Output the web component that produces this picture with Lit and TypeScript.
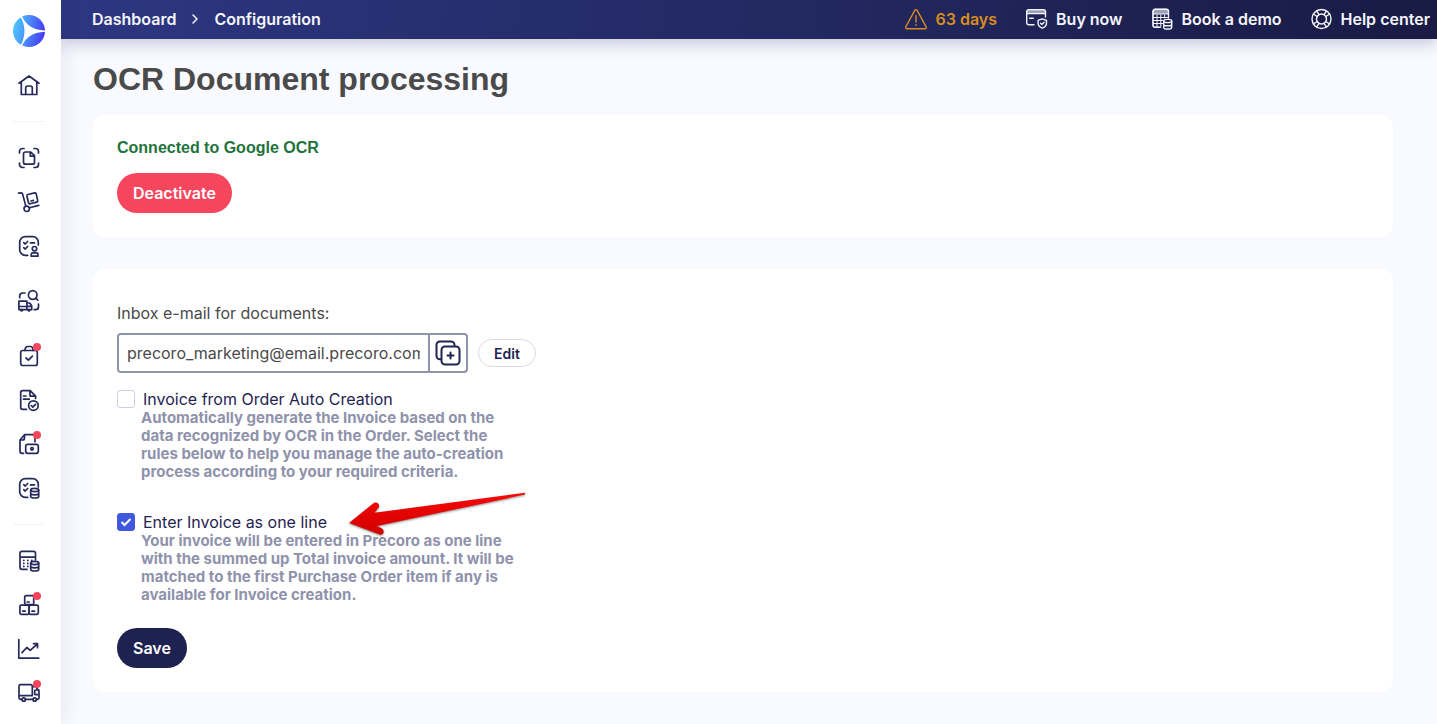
import { LitElement, html, css, svg, SVGTemplateResult } from "lit";
import { customElement, property, state } from "lit/decorators.js";

const coins = svg`<ellipse cx="17.7" cy="14" rx="4" ry="1.6"/><path d="M13.7 14v6.4c0 1 1.8 1.6 4 1.6s4-.6 4-1.6V14M13.7 17.2c0 1 1.8 1.6 4 1.6s4-.6 4-1.6"/>`;
const listFrame = svg`<path d="M21.3 11V8.2a5.5 5.5 0 0 0-5.500-5.500H8.200a5.500 5.500 0 0 0-5.500 5.500v7.600a5.500 5.500 0 0 0 5.500 5.500h2.600"/><path d="M6.700 8.700l1.500 1.300 2.500-2.500M6.700 13.700l1.500 1.300 2.500-2.500M13.500 8.900h4"/>`;
const calcDots = svg`<path stroke-dasharray=".2 3.800" d="M6.700 11.400H15M6.700 14.400H11M6.700 17.400H11"/>`;

const icons: Record<string, SVGTemplateResult> = {
  home: svg`<path d="M2 9.200 12 2l10 7.200M4.300 8v12.500h15.500V8M8.700 20.500V14a2 2 0 0 1 2-2h2.600a2 2 0 0 1 2 2v6.500"/>`,
  scan: svg`<path d="M2.500 7V5.500a3 3 0 0 1 3-3H7M17 2.500h1.500a3 3 0 0 1 3 3V7M21.500 17v1.500a3 3 0 0 1-3 3H17M7 21.500H5.500a3 3 0 0 1-3-3V17"/><path d="M8.500 6h5.300l3.700 3.700v6.500a2 2 0 0 1-2 2h-7a2 2 0 0 1-2-2V8a2 2 0 0 1 2-2zM13.300 6v4.200h4.200"/>`,
  trolley: svg`<path d="M1.500 3.200 4 2.900a1.500 1.500 0 0 1 1.600 1.200l3.200 12M12.500 17.800l9.300-2.400"/><circle cx="9.700" cy="18.800" r="2.700"/><path d="m10.900 4.500 6.800-1.600a1.300 1.300 0 0 1 1.500 1l1.500 6.700a1.300 1.300 0 0 1-1 1.500l-6.700 1.700a1.300 1.300 0 0 1-1.500-1L9.900 6a1.300 1.300 0 0 1 1-1.500zM14 11l2.300-.6"/>`,
  person: svg`${listFrame}<circle cx="17.500" cy="14.700" r="2.200"/><path d="M14.200 22.200v-1.700a1.600 1.600 0 0 1 1.600-1.600h3.600a1.600 1.600 0 0 1 1.600 1.600v1.700z"/>`,
  supplier: svg`<path d="M2.700 8.700V7a3 3 0 0 1 3-3H8M21.500 15v2.700a3 3 0 0 1-3 3h-1.300"/><circle cx="15.700" cy="6" r="4.300"/><path d="m18.800 9.200 1.900 1.900M1.900 20.600v-8.400h8v8.400M1.900 17.500h8M9.900 14h2.800l2 2.700v3.900H1.900M10 17.300h4.700"/><circle cx="4.600" cy="21.200" r=".7"/><circle cx="12" cy="21.200" r=".7"/>`,
  bag: svg`<rect x="3.700" y="6.500" width="16.600" height="15" rx="2"/><path d="M8 6.500c0-2.600 1-4 2.600-4h2.800c1.600 0 2.600 1.400 2.600 4M9 14l2.400 2.200 4-4"/>`,
  invoice: svg`<path d="M9.500 21.300H5.700a2 2 0 0 1-2-2V4.700a2 2 0 0 1 2-2h7.500l5.400 5.400v2.400M13 2.700v5.400h5.600M6.500 8H9M6.500 11.200h5.800"/><circle cx="16.400" cy="17.600" r="4.800"/><path d="m14.300 17.700 1.500 1.400 2.700-2.800"/>`,
  payment: svg`<path d="M6.500 21.300H5a2 2 0 0 1-2-2V8l4.500-5.300H16a2 2 0 0 1 2 2v5M7.500 2.700V6a2 2 0 0 1-2 2H3"/><rect x="8.700" y="12.300" width="12.600" height="9" rx="2"/><circle cx="15" cy="16.800" r="1.300"/>`,
  expense: svg`${listFrame}${coins}`,
  budget: svg`<path d="M10 20.300H5a2 2 0 0 1-2-2v-14a2 2 0 0 1 2-2h11.500a2 2 0 0 1 2 2V11M3 8.200h15.500"/>${calcDots}${coins}`,
  stock: svg`<rect x="7.700" y="2.700" width="9" height="9" rx="1.300"/><rect x="2.900" y="12.200" width="9.200" height="9.200" rx="1.300"/><rect x="12.100" y="12.200" width="9.200" height="9.200" rx="1.300"/><path d="M10.200 9h2M5.700 18.200h2.500M15 18.200h2.500"/>`,
  chart: svg`<path d="M1.800 2.500v18.600h20M5 15.700l4.800-5.200 3.400 2.800L20.300 7M16.500 6.700h4v4"/>`,
  delivery: svg`<path d="M5 18.300H3.500A1.500 1.500 0 0 1 2 16.800V5.200a1.500 1.500 0 0 1 1.500-1.500h10.300a1.500 1.500 0 0 1 1.500 1.500v9.500M2 14.700h13.300M8.500 18.300h7.400M15.300 5.700h3.500L22 10v6.800a1.500 1.500 0 0 1-1.500 1.500h-1M22 9h-3.300a1 1 0 0 0-1 1v2.700a1 1 0 0 0 1 1H22"/><circle cx="6.700" cy="18.500" r="1.700"/><circle cx="17.700" cy="18.500" r="1.700"/>`,
  warning: svg`<path d="M9.800 2.400a1.300 1.300 0 0 1 2.300 0l9.100 16.400a1.300 1.300 0 0 1-1.200 1.900H2a1.300 1.300 0 0 1-1.200-1.900zM11 7.700v6.300M11 16.500v.700"/>`,
  card: svg`<path fill="currentColor" fill-opacity=".6" stroke="none" d="M.7 5.600v-2a2 2 0 0 1 2-2h14.800a2 2 0 0 1 2 2v2z"/><path d="M8 16.800H2.700a2 2 0 0 1-2-2V3.600a2 2 0 0 1 2-2h14.800a2 2 0 0 1 2 2V9M.7 5.600h18.800M3.700 10.300h3.600"/><path d="M16.300 10.800l4.200 1.600v2.800c0 2.400-1.800 4-4.200 5-2.400-1-4.200-2.600-4.200-5v-2.800zM14.600 15.300l1.300 1.200 2.200-2.300"/>`,
  calc: svg`<g transform="translate(-2 -1)"><path fill="currentColor" fill-opacity=".6" stroke="none" d="M3 7V4.300a2 2 0 0 1 2-2h11.500a2 2 0 0 1 2 2V7z"/><path d="M10 20.300H5a2 2 0 0 1-2-2v-14a2 2 0 0 1 2-2h11.500a2 2 0 0 1 2 2V11M3 7h15.500M3.500 10.500h14M3.500 13.500h9M3.500 16.500h9M7 8v12M10.800 8v12M14.600 8v3" stroke-width="1"/><path d="M10 20.300H5a2 2 0 0 1-2-2v-14a2 2 0 0 1 2-2h11.500a2 2 0 0 1 2 2V11"/>${coins}</g>`,
  help: svg`<circle cx="10.500" cy="11" r="9.500"/><circle cx="10.500" cy="11" r="5"/><path d="M5.500 2.900 8 6.700M2.400 6l3.800 2.500M15.500 2.900 13 6.700M18.600 6l-3.800 2.500M5.500 19.100 8 15.300M2.400 16l3.800-2.500M15.500 19.100 13 15.300M18.600 16l-3.800-2.500"/>`,
};

interface NavItem {
  icon: string;
  label: string;
  dot?: boolean;
}

const groups: NavItem[][] = [
  [
    { icon: "scan", label: "Requests" },
    { icon: "trolley", label: "Orders" },
    { icon: "person", label: "Approvals" },
  ],
  [{ icon: "supplier", label: "Suppliers" }],
  [
    { icon: "bag", label: "Purchases", dot: true },
    { icon: "invoice", label: "Invoices" },
    { icon: "payment", label: "Payments", dot: true },
    { icon: "expense", label: "Expenses" },
  ],
];

const tools: NavItem[] = [
  { icon: "budget", label: "Budgets" },
  { icon: "stock", label: "Inventory", dot: true },
  { icon: "chart", label: "Reports" },
  { icon: "delivery", label: "Deliveries", dot: true },
];

@customElement("side-nav")
class SideNav extends LitElement {
  static styles = css`
    :host {
      display: flex;
      flex-direction: column;
      align-items: center;
      box-sizing: border-box;
      width: 61px;
      padding: 15px 3px 0 0;
      background: #fff;
      box-shadow: 0 0 20px rgba(32, 34, 88, 0.12);
      position: relative;
      z-index: 1;
    }
    a {
      display: block;
      position: relative;
      color: #262a5a;
    }
    svg {
      display: block;
    }
    .logo {
      margin-bottom: 27px;
    }
    .icon {
      width: 24px;
      height: 24px;
      fill: none;
      stroke: currentColor;
      stroke-width: 1.7;
      stroke-linecap: round;
      stroke-linejoin: round;
    }
    .dot {
      position: absolute;
      top: -1px;
      right: 0;
      width: 8px;
      height: 8px;
      border-radius: 50%;
      background: #f6465d;
    }
    .divider {
      width: 32px;
      height: 1px;
      margin: 23px 0 24px;
      border: 0;
      background: #f3f4f9;
    }
    .groups {
      display: flex;
      flex-direction: column;
      gap: 31px;
      padding-bottom: 1px;
    }
    .group {
      display: flex;
      flex-direction: column;
      gap: 20px;
    }
  `;

  private item(i: NavItem) {
    return html`<a href="#" aria-label=${i.label}>
      <svg class="icon" viewBox="0 0 24 24">${icons[i.icon]}</svg>
      ${i.dot ? html`<span class="dot"></span>` : ""}
    </a>`;
  }

  render() {
    return html`
      <a class="logo" href="#" aria-label="Precoro">
        <svg width="32" height="32" viewBox="0 0 32 32">
          <defs>
            <linearGradient id="l" x1="0" x2="1" y1=".4" y2=".6">
              <stop offset="0" stop-color="#4fc8fb" />
              <stop offset=".45" stop-color="#4a8cf9" />
              <stop offset="1" stop-color="#4535f5" />
            </linearGradient>
          </defs>
          <circle cx="16" cy="16" r="16" fill="url(#l)" />
          <path d="M9 1.300C12.500 9.500 19.500 15 32 15.600v1.200C19.500 17.400 12.500 22.500 9 31L7.600 30.500C12.800 21 12.800 11 7.500 1.700z" fill="#fff" />
        </svg>
      </a>
      ${this.item({ icon: "home", label: "Home" })}
      <hr class="divider" />
      <nav class="groups">
        ${groups.map((g) => html`<div class="group">${g.map((i) => this.item(i))}</div>`)}
      </nav>
      <hr class="divider" />
      <nav class="group">${tools.map((i) => this.item(i))}</nav>
    `;
  }
}

@customElement("top-bar")
class TopBar extends LitElement {
  static styles = css`
    :host {
      display: flex;
      align-items: center;
      justify-content: space-between;
      box-sizing: border-box;
      height: 39px;
      padding: 0 7px 1px 31px;
      background: linear-gradient(95deg, #2d3782, #191b44);
      box-shadow: 0 4px 16px rgba(32, 36, 90, 0.25);
      font-weight: 600;
      font-size: 16px;
      line-height: 20px;
    }
    a {
      display: flex;
      align-items: center;
      gap: 8px;
      color: #f4f5fc;
      text-decoration: none;
      white-space: nowrap;
    }
    .crumbs {
      display: flex;
      align-items: center;
      gap: 15px;
    }
    .actions {
      display: flex;
      gap: 29px;
    }
    .trial {
      color: #d98c1f;
    }
    svg {
      fill: none;
      stroke: currentColor;
      stroke-width: 1.4;
      stroke-linecap: round;
      stroke-linejoin: round;
    }
    .chevron {
      color: #f4f5fc;
      stroke-width: 1.5;
    }
  `;

  private action(icon: string, label: string, cls = "") {
    return html`<a class=${cls} href="#"
      ><svg width="22" height="22" viewBox="0 0 22 22">${icons[icon]}</svg>${label}</a
    >`;
  }

  render() {
    return html`
      <nav class="crumbs">
        <a href="#">Dashboard</a>
        <svg class="chevron" width="8" height="12" viewBox="0 0 8 12"><path d="m2 2 4 4-4 4" /></svg>
        <a href="#">Configuration</a>
      </nav>
      <div class="actions">
        ${this.action("warning", "63 days", "trial")} ${this.action("card", "Buy now")}
        ${this.action("calc", "Book a demo")} ${this.action("help", "Help center")}
      </div>
    `;
  }
}

@customElement("check-option")
class CheckOption extends LitElement {
  @property() label = "";
  @property() hint = "";
  @property({ type: Boolean }) checked = false;

  static styles = css`
    :host {
      display: block;
      max-width: 408px;
    }
    .row {
      display: flex;
      align-items: flex-start;
      height: 19px;
      gap: 8px;
      color: #1f2452;
      font-size: 16px;
      line-height: 19px;
    }
    .box {
      display: grid;
      width: 18px;
      height: 18px;
    }
    .box > * {
      grid-area: 1 / 1;
    }
    input {
      appearance: none;
      box-sizing: border-box;
      width: 18px;
      height: 18px;
      margin: 0;
      border: 1px solid #cdcede;
      border-radius: 3px;
      background: #fff;
    }
    input:checked {
      border-color: #4059dc;
      background: #4059dc;
    }
    svg {
      fill: none;
      stroke: #fff;
      stroke-width: 2;
      pointer-events: none;
    }
    p {
      margin: 0 0 0 24px;
      color: #8f92ab;
      font-size: 15px;
      line-height: 18px;
      font-weight: 700;
    }
  `;

  render() {
    return html`
      <label class="row">
        <span class="box">
          <input
            type="checkbox"
            .checked=${this.checked}
            @change=${(e: Event) => (this.checked = (e.target as HTMLInputElement).checked)}
          />
          ${this.checked ? html`<svg viewBox="0 0 18 18"><path d="m4.500 9 3 3 6-6" /></svg>` : ""}
        </span>
        ${this.label}
      </label>
      <p>${this.hint}</p>
    `;
  }
}

@customElement("app-root")
class AppRoot extends LitElement {
  @state() private email = "precoro_marketing@email.precoro.com";

  static styles = css`
    :host {
      display: flex;
      min-height: 100vh;
      background: #f9faff;
      font-family: Inter, "Liberation Sans", sans-serif;
      color: #4a4a4a;
    }
    side-nav {
      flex: none;
    }
    .page {
      flex: 1;
      min-width: 0;
    }
    main {
      padding: 22px 44px 32px 32px;
    }
    h1 {
      margin: 0 0 18px;
      font: 700 32px/36px "Liberation Sans", Arial, sans-serif;
    }
    .card {
      padding: 24px;
      border-radius: 12px;
      background: #fff;
    }
    .card + .card {
      margin-top: 32px;
      padding-top: 35px;
    }
    .status {
      margin: 0 0 16px;
      color: #1f733c;
      font: 700 16px/18px "Liberation Sans", Arial, sans-serif;
    }
    button {
      box-sizing: border-box;
      border: 0;
      font: inherit;
      cursor: pointer;
    }
    .pill {
      display: block;
      height: 40px;
      padding: 0 16px;
      border-radius: 20px;
      color: #fff;
      font-size: 16px;
      font-weight: 600;
    }
    .danger {
      background: #f6465d;
    }
    .primary {
      background: #1d2250;
      margin-top: 24px;
    }
    .field-label {
      display: block;
      margin-bottom: 11px;
      font-size: 16px;
      line-height: 18px;
    }
    .field {
      display: flex;
      align-items: center;
      gap: 10px;
      margin-bottom: 17px;
    }
    .copy-box {
      display: flex;
      box-sizing: border-box;
      width: 351px;
      height: 40px;
      border: 2px solid #8f92ab;
      border-radius: 4px;
    }
    .copy-box input {
      flex: 1;
      min-width: 0;
      padding: 0 8px;
      border: 0;
      outline: 0;
      background: none;
      color: inherit;
      font: inherit;
      font-size: 16px;
    }
    .copy {
      display: grid;
      place-items: center;
      width: 38px;
      padding: 0;
      border-left: 2px solid #8f92ab;
      background: none;
      color: #1f2452;
    }
    .copy svg {
      fill: none;
      stroke: currentColor;
      stroke-width: 2;
      stroke-linecap: round;
    }
    .edit {
      height: 28px;
      padding: 0 15px;
      border: 1px solid #d9dae6;
      border-radius: 14px;
      background: #fff;
      color: #1f2452;
      font-size: 14px;
      font-weight: 600;
    }
    .pointed {
      position: relative;
      margin-top: 32px;
    }
    .arrow {
      position: absolute;
      left: 228px;
      top: -24px;
      pointer-events: none;
      filter: drop-shadow(0 1px 1px rgba(0, 0, 0, 0.45));
    }
  `;

  render() {
    return html`
      <side-nav></side-nav>
      <div class="page">
        <top-bar></top-bar>
        <main>
          <h1>OCR Document processing</h1>
          <section class="card">
            <p class="status">Connected to Google OCR</p>
            <button class="pill danger">Deactivate</button>
          </section>
          <section class="card">
            <label class="field-label" for="inbox">Inbox e-mail for documents:</label>
            <div class="field">
              <div class="copy-box">
                <input id="inbox" type="text" readonly .value=${this.email} />
                <button class="copy" aria-label="Copy">
                  <svg width="26" height="26" viewBox="0 0 26 26">
                    <path d="M6 19.300H5a3.500 3.500 0 0 1-3.500-3.500V5A3.500 3.500 0 0 1 5 1.500h11A3.500 3.500 0 0 1 19.500 5v.700" />
                    <rect x="6.500" y="6.500" width="18" height="18" rx="3.500" />
                    <path d="M15.500 12.500v6M12.500 15.500h6" />
                  </svg>
                </button>
              </div>
              <button class="edit">Edit</button>
            </div>
            <check-option
              label="Invoice from Order Auto Creation"
              hint="Automatically generate the Invoice based on the data recognized by OCR in the Order. Select the rules below to help you manage the auto-creation process according to your required criteria."
            ></check-option>
            <div class="pointed">
              <check-option
                checked
                label="Enter Invoice as one line"
                hint="Your invoice will be entered in Precoro as one line with the summed up Total invoice amount. It will be matched to the first Purchase Order item if any is available for Invoice creation."
              ></check-option>
              <svg class="arrow" width="182" height="50" viewBox="0 0 182 50">
                <defs>
                  <linearGradient id="r" x1="0" x2="0" y1="0" y2="1">
                    <stop offset="0" stop-color="#f80808" />
                    <stop offset="1" stop-color="#d00000" />
                  </linearGradient>
                </defs>
                <path
                  fill="url(#r)"
                  d="M4 34 28.500 14.300C31 12 35.500 14.500 33.700 18.500L29.500 23.800 180 3.800v1.800L32 37l5 2.600C40.500 42 38 46.800 34.500 45.500Z"
                />
              </svg>
            </div>
            <button class="pill primary">Save</button>
          </section>
        </main>
      </div>
    `;
  }
}
